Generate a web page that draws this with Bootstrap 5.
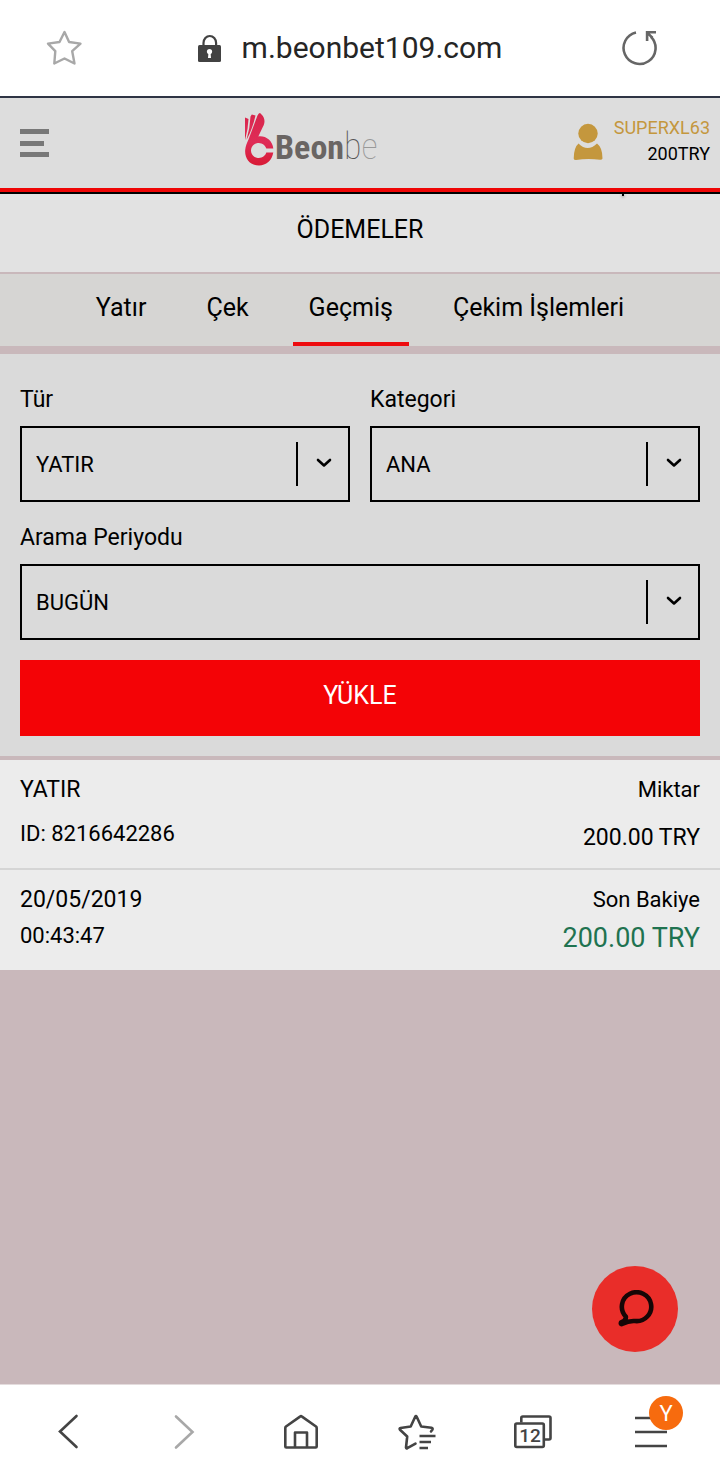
<!DOCTYPE html>
<html lang="tr">
<head>
<meta charset="utf-8">
<meta name="viewport" content="width=device-width, initial-scale=1">
<title>Ödemeler</title>
<link href="https://cdn.jsdelivr.net/npm/bootstrap@5.3.0/dist/css/bootstrap.min.css" rel="stylesheet">
<style>
  body { font-family: Roboto, "Liberation Sans", sans-serif; font-size: 22px; line-height: 28px; font-weight: 400; color: #000; background: #c9b8bb; }
  svg { display: block; }
  .plain-btn { border: 0; background: none; padding: 0; display: block; }
  .address-bar { height: 98px; background: #fff; border-bottom: 2px solid #2f3445; padding: 0 62px 0 46px; }
  .address { font-size: 30px; line-height: 36px; color: #252525; }
  .site-header { height: 96px; background: #ddd; border-bottom: 2px solid #000; box-shadow: inset 0 -4px #ee0505; padding: 0 10px 4px 20px; position: relative; z-index: 1; }
  .site-header::after { content: ""; position: absolute; top: 96px; right: 96px; width: 2px; height: 2px; background: #000; box-shadow: 0 1px 3px #0008; }
  .brand-link { color: #6a6563; text-decoration: none; }
  .brand-bold { font: 700 34px/54px "Roboto Condensed", Roboto, sans-serif; color: #6a6563; }
  .brand-thin { font: 100 36px/54px "Roboto Condensed", Roboto, sans-serif; color: #555; }
  .brand-thin span { color: #999; }
  .user-box { font-size: 18px; line-height: 26px; text-align: right; }
  .user-name { color: #c4973d; }
  .page-title { font-size: 25px; line-height: 34px; font-weight: 400; background: #e2e2e2; border-bottom: 2px solid #c9b8bb; padding: 19px 0 25px; margin: 0; text-align: center; }
  .tab-bar { background: #d6d5d3; height: 72px; gap: 28px; }
  .tab-bar .nav-link { font-size: 25px; line-height: 34px; color: #000; padding: 17px 16px; border-bottom: 4px solid transparent; }
  .tab-bar .nav-link.active { border-color: #ee0a0e; }
  .filter { background: #dadada; padding: 32px 20px 20px; margin-top: 8px; }
  .filter .row { --bs-gutter-x: 20px; --bs-gutter-y: 22px; }
  .filter label { font-size: 23px; line-height: 28px; margin-bottom: 12px; display: block; }
  .box-select { appearance: none; display: block; width: 100%; height: 76px; border: 2px solid #000; border-radius: 0; color: #000; padding: 2px 60px 0 14px; font-size: 22px;
    background: transparent url("data:image/svg+xml,%3Csvg xmlns='http://www.w3.org/2000/svg' width='52' height='44'%3E%3Cpath d='M1 0v44' stroke='%23000' stroke-width='2'/%3E%3Cpath d='M22 18l6 5.500 6-5.500' fill='none' stroke='%23000' stroke-width='2.600' stroke-linecap='round' stroke-linejoin='round'/%3E%3C/svg%3E") no-repeat right center; }
  .load-btn { height: 76px; background: #f40306; color: #fff; border: 0; border-radius: 0; font-size: 25px; line-height: 34px; font-weight: 400; padding: 0 0 4px; margin-top: 20px; }
  .record { background: #ececec; padding: 16px 20px; }
  .record + .record { border-top: 2px solid #d5d5d5; }
  .fs-mid { font-size: 23px; line-height: 28px; }
  .amount { margin-top: 20px; }
  .balance { font-size: 27px; line-height: 32px; color: #1f7350; padding-top: 8px; }
  .chat-btn { position: absolute; right: 42px; bottom: 32px; width: 86px; height: 86px; border-radius: 50%; background: #e92d29; }
  .bottom-nav { height: 96px; background: #fff; border-top: 1px solid #e4dcdd; padding: 0 12px 2px 10px; }
  .bottom-nav .plain-btn { flex: 1 1 0; }
  .bottom-nav svg { margin: 0 auto; }
</style>
</head>
<body>
<div class="d-flex flex-column min-vh-100">

  <div class="address-bar d-flex align-items-center justify-content-between">
    <button class="plain-btn" aria-label="Yer imi">
      <svg width="36" height="36" viewBox="0 0 36 36" fill="none" stroke="#a8a8a8" stroke-width="2.400" stroke-linejoin="round"><path d="M18.500 2l4.600 10 11.400 1.600-8.300 7.600 2.300 12.300-10-5-10.200 5 1-12.300L2 13.600 13.500 12z"/></svg>
    </button>
    <div class="d-flex align-items-center">
      <svg width="44" height="28" viewBox="0 0 44 28"><path d="M5.500 13V9a6.300 7 0 0 1 12.600 0V13" fill="none" stroke="#424242" stroke-width="2.200"/><rect x="0" y="11" width="23" height="17" rx="1.500" fill="#424242"/><circle cx="11.500" cy="17.500" r="2.600" fill="#fff"/><path d="M10.500 18h2l.5 6h-3z" fill="#fff"/></svg>
      <span class="address me-1">m.beonbet109.com</span>
    </div>
    <button class="plain-btn" aria-label="Yenile">
      <svg width="36" height="36" viewBox="0 0 36 36" fill="none" stroke="#666" stroke-width="2.600"><path d="M14 2.400A16 16 0 1 0 29 6.800"/><path d="M34 2.300H25.100V11M25.500 2.800l5 5"/></svg>
    </button>
  </div>

  <header class="site-header d-flex align-items-center justify-content-between">
    <button class="plain-btn" aria-label="Menü">
      <svg width="29" height="28" fill="#787878"><path d="M0 0h29v5H0zM0 12h24v5H0zM0 23h29v5H0z"/></svg>
    </button>
    <a href="#" class="brand-link d-flex align-items-end">
      <svg class="mb-2" width="31" height="54" viewBox="-1 0 31 54">
        <defs><linearGradient id="hand" x2="0" y2="1"><stop offset="0" stop-color="#d8254b"/><stop offset=".55" stop-color="#df2c57"/><stop offset="1" stop-color="#d81a35"/></linearGradient></defs>
        <g fill="url(#hand)">
          <path d="M0 5.500L3.500 7Q3.200 17 0 28z"/>
          <path d="M5.500 4.500L6.800 2.500 10.500 3.500Q7.500 17 1.500 28 5 16 5.500 4.500z"/>
          <path d="M12.500 3.500Q14.500-1 16.500 2.500C20.500 6.500 20 11 17.800 15L13.300 24.500C20.500 23.500 27.500 28.500 28.300 36.500H21.300A7.800 7.500 0 1 0 21.300 40.500H28.300C27 48.500 21 53.500 14 53.500 5 53.500-.5 46.500.2 38 .5 34.500 2 30.500 3.500 27.500z"/>
        </g>
      </svg>
      <span class="brand-bold">Beon</span><span class="brand-thin">b<span>e</span></span>
    </a>
    <div class="d-flex align-items-center">
      <svg class="me-2 mb-1" width="33" height="38" viewBox="0 0 33 38" fill="#c4973d"><circle cx="15" cy="11.500" r="9.700"/><path d="M5.500 21.500Q14.500 30.500 24 21.500q5.500 4 5.500 15-.5 1.500-2.500 1.300-12-1.700-24 .2Q.8 38 .7 36.500.8 25.500 5.500 21.500z"/></svg>
      <div class="user-box mb-1"><div class="user-name">SUPERXL63</div><div>200TRY</div></div>
    </div>
  </header>

  <main class="flex-fill position-relative">
    <h1 class="page-title">ÖDEMELER</h1>
    <nav class="tab-bar nav justify-content-center flex-nowrap">
      <a class="nav-link" href="#">Yatır</a>
      <a class="nav-link" href="#">Çek</a>
      <a class="nav-link active" href="#" aria-current="page">Geçmiş</a>
      <a class="nav-link" href="#">Çekim İşlemleri</a>
    </nav>

    <form class="filter">
      <div class="row">
        <div class="col-6">
          <label for="type">Tür</label>
          <select id="type" class="box-select"><option>YATIR</option></select>
        </div>
        <div class="col-6">
          <label for="category">Kategori</label>
          <select id="category" class="box-select"><option>ANA</option></select>
        </div>
        <div class="col-12">
          <label for="period">Arama Periyodu</label>
          <select id="period" class="box-select"><option>BUGÜN</option></select>
        </div>
      </div>
      <button type="button" class="btn load-btn w-100">YÜKLE</button>
    </form>

    <section class="mt-1">
      <div class="record d-flex justify-content-between">
        <div><div class="fs-mid">YATIR</div><div class="mt-3">ID: 8216642286</div></div>
        <div class="text-end"><div>Miktar</div><div class="fs-mid amount">200.00 TRY</div></div>
      </div>
      <div class="record d-flex justify-content-between">
        <div><div class="fs-mid">20/05/2019</div><div class="mt-2">00:43:47</div></div>
        <div class="text-end"><div>Son Bakiye</div><div class="balance">200.00 TRY</div></div>
      </div>
    </section>

    <button class="plain-btn chat-btn" aria-label="Canlı destek">
      <svg class="mx-auto" width="38" height="38" viewBox="0 0 38 38" fill="none" stroke="#160606" stroke-width="4.600" stroke-linejoin="round"><path d="M9.800 26.500A14.700 14.400 0 1 1 19 31Q13 30.500 6 34 4.300 34.400 5 32.400 10.500 30.500 9.800 26.500z"/></svg>
    </button>
  </main>

  <nav class="bottom-nav d-flex align-items-center">
    <button class="plain-btn" aria-label="Geri">
      <svg width="36" height="36" viewBox="0 0 36 36" fill="none" stroke="#444" stroke-width="2.600" stroke-linecap="round"><path d="M26.500 2L10 17.500 26.500 33"/></svg>
    </button>
    <button class="plain-btn" aria-label="İleri">
      <svg width="36" height="36" viewBox="0 0 36 36" fill="none" stroke="#a8a8a8" stroke-width="2.600" stroke-linecap="round"><path d="M10 2.500L26.500 18 10 33.500"/></svg>
    </button>
    <button class="plain-btn" aria-label="Ana sayfa">
      <svg width="36" height="36" viewBox="0 0 36 36" fill="none" stroke="#444" stroke-width="2.600" stroke-linejoin="round"><path d="M17 2.600q1-.8 2 0L33 12.500q.7.600.7 1.500v18.500q0 1-1 1H3.300q-1 0-1-1V14q0-.9.7-1.500zM12 33.500v-15h12v15"/></svg>
    </button>
    <button class="plain-btn" aria-label="Yer imleri">
      <svg width="38" height="36" viewBox="0 0 38 36" fill="none" stroke="#444" stroke-width="2.600" stroke-linejoin="round" stroke-linecap="round"><path d="M33 17.500l1.500-2q.5-1.500-1-1.800l-10.300-1.200-4.500-9.700q-.7-1.300-1.500 0l-4.500 9.700L2.500 14q-1.500.3-.5 1.800l7.200 6.700L8 33.500q.2 1.200 1.300.7l8.200-4.500"/><path stroke-linecap="butt" d="M21.500 22h16M21.500 28H33M21.500 34H30"/></svg>
    </button>
    <button class="plain-btn" aria-label="Sekmeler">
      <svg width="38" height="36" viewBox="0 0 38 36" fill="none" stroke="#444" stroke-width="2.600"><path d="M7.300 8.500V4q0-1.500 1.500-1.500H35q1.500 0 1.500 1.500v20q0 1.500-1.500 1.500h-5"/><rect x="1.300" y="9.500" width="28.500" height="23.500" rx="1.500"/><text x="16" y="28" text-anchor="middle" font-size="19" font-weight="500" font-family="Roboto, sans-serif" fill="#444" stroke="none">12</text></svg>
    </button>
    <button class="plain-btn" aria-label="Menü, Y">
      <svg width="68" height="80" viewBox="0 0 68 80"><path d="M19 26h32M19 40h32M19 54h32" stroke="#444" stroke-width="2.400"/><circle cx="50" cy="21" r="17" fill="#f76b0e"/><text x="50" y="29" text-anchor="middle" font-size="22" font-family="Roboto, sans-serif" fill="#fff">Y</text></svg>
    </button>
  </nav>
</div>
<script src="https://cdn.jsdelivr.net/npm/bootstrap@5.3.0/dist/js/bootstrap.bundle.min.js"></script>
</body>
</html>
